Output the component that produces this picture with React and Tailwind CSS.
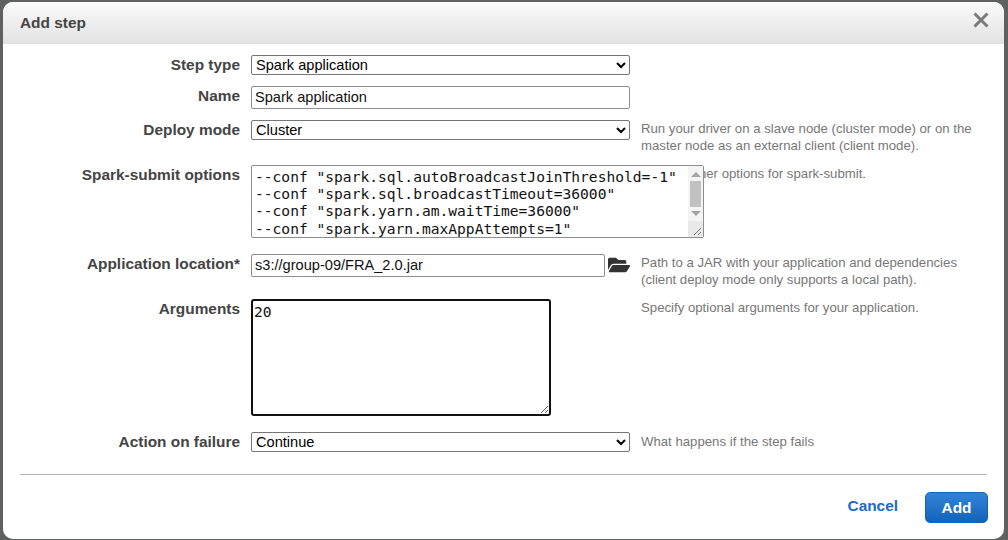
import { FaFolderOpen } from 'react-icons/fa';

const labelClass = "w-[237px] shrink-0 text-right text-[15.4px] font-bold text-[#444] leading-[18px]";
const helpClass = "text-[13.2px] leading-[17px] text-[#777]";
const selectClass = "w-[379px] h-5 bg-white border border-[#767676] rounded-[2px] text-[14.6px] leading-[16px] text-black pl-0 pb-[1px] block";
const inputClass = "h-[23px] bg-white border border-[#8e8e8e] rounded-[2px] text-[14.6px] text-[#111] px-[3px] pb-[1px] block";
const monoClass = "block bg-white text-[14.6px] leading-[17.2px] text-[#111] font-['DejaVu_Sans_Mono',monospace]";

const sparkOptions = `--conf "spark.sql.autoBroadcastJoinThreshold=-1"
--conf "spark.sql.broadcastTimeout=36000"
--conf "spark.yarn.am.waitTime=36000"
--conf "spark.yarn.maxAppAttempts=1"
--conf "spark.executor.memoryOverhead=2048"
--conf "spark.driver.memoryOverhead=2048"`;

function Row({ label, labelTop = 0, height, help, helpTop = 0, children }) {
    return (
        <div className="flex" style={{ height }}>
            <div className={labelClass} style={{ paddingTop: labelTop }}>{label}</div>
            <div className="w-[401px] shrink-0 pl-[11px] relative z-10">{children}</div>
            <div className={`${helpClass} w-[345px]`} style={{ paddingTop: helpTop }}>{help}</div>
        </div>
    );
}

// Native scrollbars don't show in the capture, so this one is drawn over the textarea
function FakeScrollbar() {
    return (
        <div className="absolute top-[1px] right-[1px] bottom-[1px] w-[15px] bg-[#f4f4f4] flex flex-col items-center">
            <div className="mt-[6px] w-0 h-0 border-x-[5px] border-x-transparent border-b-[5px] border-b-[#a3a3a3]" />
            <div className="mt-[4px] w-[11px] h-[26px] bg-[#c1c1c1]" />
            <div className="mt-[4px] w-0 h-0 border-x-[5px] border-x-transparent border-t-[5px] border-t-[#a3a3a3]" />
            <div className="mt-auto w-[15px] h-[16px] bg-[#e9e9e9] flex items-end justify-end">
                <svg viewBox="0 0 10 10" className="w-[10px] h-[10px] mb-[1px] mr-[1px]" stroke="#777" strokeWidth="1" fill="none">
                    <path d="M2 9 9 2M6 9 9 6" />
                </svg>
            </div>
        </div>
    );
}

export default function App() {
    return (
        <div className="w-[1008px] h-[540px] overflow-hidden bg-[#5f6161] pt-[2px] pl-[3px] pr-1 font-['Liberation_Sans',Arial,sans-serif]">
            <div className="h-[537px] bg-white rounded-[10px] overflow-hidden">
                <div className="h-[42px] bg-gradient-to-b from-[#fafafa] to-[#e2e2e2] flex justify-between pl-[17px] pr-[15px]">
                    <h1 className="text-[15.4px] font-bold text-[#444] mt-[9px]">Add step</h1>
                    <svg viewBox="0 0 16 16" className="w-4 h-4 mt-[10px] text-[#7a7a7a]" stroke="currentColor" strokeWidth="3" fill="none">
                        <path d="M1.5 1.5 14.5 14.5M14.5 1.5 1.5 14.5" />
                    </svg>
                </div>

                <div className="pt-[11px]">
                    <Row label="Step type" labelTop={1} height={31}>
                        <select className={selectClass} defaultValue="Spark application">
                            <option>Spark application</option>
                        </select>
                    </Row>
                    <Row label="Name" labelTop={1} height={34}>
                        <input className={`${inputClass} w-[379px]`} defaultValue="Spark application" />
                    </Row>
                    <Row
                        label="Deploy mode"
                        labelTop={1}
                        height={45}
                        helpTop={0}
                        help={<>Run your driver on a slave node (cluster mode) or on the<br />master node as an external client (client mode).</>}
                    >
                        <select className={selectClass} defaultValue="Cluster">
                            <option>Cluster</option>
                        </select>
                    </Row>
                    <Row label="Spark-submit options" labelTop={1} height={89} helpTop={0} help="Specify other options for spark-submit.">
                        <div className="relative w-[453px] h-[73px]">
                            <textarea
                                className={`${monoClass} w-full h-full border border-[#8e8e8e] rounded-[2px] pl-[3px] pt-[2px] overflow-hidden resize-none whitespace-pre`}
                                defaultValue={sparkOptions}
                            />
                            <FakeScrollbar />
                        </div>
                    </Row>
                    <Row
                        label="Application location*"
                        labelTop={1}
                        height={45}
                        helpTop={0}
                        help={<>Path to a JAR with your application and dependencies<br />(client deploy mode only supports a local path).</>}
                    >
                        <div className="flex items-center">
                            <input className={`${inputClass} w-[354px]`} defaultValue="s3://group-09/FRA_2.0.jar" />
                            <FaFolderOpen className="w-[22px] h-[20px] ml-[3px] -mt-[2px] text-[#333]" />
                        </div>
                    </Row>
                    <Row label="Arguments" labelTop={1} height={133} help="Specify optional arguments for your application.">
                        <textarea
                            className={`${monoClass} w-[300px] h-[117px] border-2 border-[#111] rounded-[3px] pl-[1px] pt-[2px] resize outline-none`}
                            defaultValue="20"
                        />
                    </Row>
                    <Row label="Action on failure" labelTop={1} height={42} helpTop={1} help="What happens if the step fails">
                        <select className={selectClass} defaultValue="Continue">
                            <option>Continue</option>
                        </select>
                    </Row>
                </div>

                <div className="mx-[17px] border-t border-[#b4b4b4]" />

                <div className="flex items-center justify-end gap-[27px] mr-4 mt-[17px]">
                    <button className="text-[15.4px] font-bold text-[#1a6cc4] mb-[3px]">Cancel</button>
                    <button className="w-[63px] h-[31px] rounded-[5px] border border-[#1465b8] bg-gradient-to-b from-[#3283d8] to-[#1263ba] text-[15.4px] font-bold text-white">Add</button>
                </div>
            </div>
        </div>
    );
}
